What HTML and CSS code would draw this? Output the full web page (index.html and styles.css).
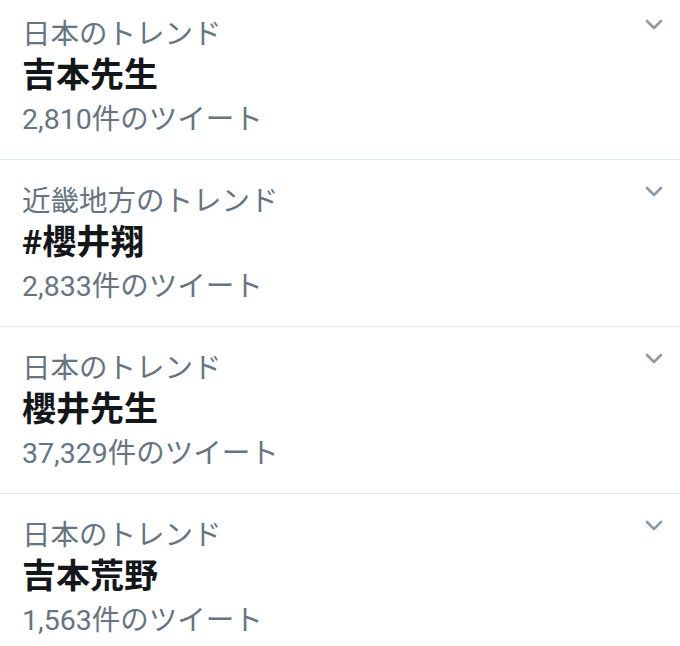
FILE: index.html
```html
<!DOCTYPE html>
<html lang="ja">
<head>
<meta charset="utf-8">
<link rel="stylesheet" href="styles.css">
</head>
<body>
<div class="list">
  <div class="item">
    <div class="content">
      <div class="meta">日本のトレンド</div>
      <div class="title">吉本先生</div>
      <div class="count">2,810件のツイート</div>
    </div>
    <svg class="chev" width="18" height="12" viewBox="0 0 18 12"><polyline points="2,2 9,9 16,2" fill="none" stroke="#8d9aa6" stroke-width="2.6" stroke-linecap="round" stroke-linejoin="round"/></svg>
  </div>
  <div class="item">
    <div class="content">
      <div class="meta">近畿地方のトレンド</div>
      <div class="title">#櫻井翔</div>
      <div class="count">2,833件のツイート</div>
    </div>
    <svg class="chev" width="18" height="12" viewBox="0 0 18 12"><polyline points="2,2 9,9 16,2" fill="none" stroke="#8d9aa6" stroke-width="2.6" stroke-linecap="round" stroke-linejoin="round"/></svg>
  </div>
  <div class="item">
    <div class="content">
      <div class="meta">日本のトレンド</div>
      <div class="title">櫻井先生</div>
      <div class="count">37,329件のツイート</div>
    </div>
    <svg class="chev" width="18" height="12" viewBox="0 0 18 12"><polyline points="2,2 9,9 16,2" fill="none" stroke="#8d9aa6" stroke-width="2.6" stroke-linecap="round" stroke-linejoin="round"/></svg>
  </div>
  <div class="item">
    <div class="content">
      <div class="meta">日本のトレンド</div>
      <div class="title">吉本荒野</div>
      <div class="count">1,563件のツイート</div>
    </div>
    <svg class="chev" width="18" height="12" viewBox="0 0 18 12"><polyline points="2,2 9,9 16,2" fill="none" stroke="#8d9aa6" stroke-width="2.6" stroke-linecap="round" stroke-linejoin="round"/></svg>
  </div>
</div>
</body>
</html>
```
FILE: styles.css
```css
html, body {
  margin: 0;
  padding: 0;
  background: #ffffff;
  overflow: hidden;
}
body {
  font-family: Roboto, "Noto Sans CJK JP", sans-serif;
}
.list {
  margin-top: -7px;
}
.item {
  display: flex;
  align-items: flex-start;
  padding: 24px 17px 21px 22px;
  border-bottom: 1px solid #e3e8ec;
}
.content {
  flex: 1;
  display: flex;
  flex-direction: column;
}
.meta {
  font-size: 28.5px;
  line-height: 36px;
  color: #66757f;
}
.title {
  font-size: 34px;
  line-height: 44px;
  font-weight: 700;
  color: #14171a;
}
.count {
  margin-top: 5px;
  font-size: 28.5px;
  line-height: 36px;
  color: #66757f;
}
.chev {
  display: block;
  margin-top: 2px;
}
```
